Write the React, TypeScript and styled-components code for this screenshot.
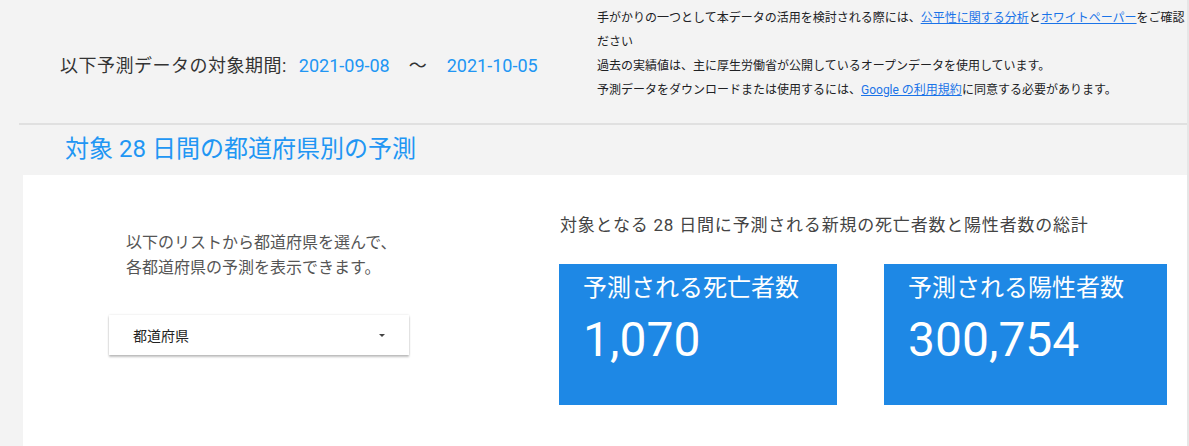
import React from "react";
import styled, { createGlobalStyle } from "styled-components";

const GlobalStyle = createGlobalStyle`
    html, body {
        margin: 0;
        padding: 0;
        background: #f3f3f3;
        font-family: "Roboto", "Noto Sans CJK JP", sans-serif;
        overflow: hidden;
    }
`;

const PageStyled = styled.div`
    width: 1187px;
    height: 446px;
    border-right: 2px solid #e6e6e6;
    overflow: hidden;
`;

const HeaderStyled = styled.div`
    display: flex;
    align-items: flex-start;
    height: 123px;
    padding-left: 60px;
    overflow: hidden;
`;

const PeriodStyled = styled.div`
    width: 537px;
    padding-top: 54px;
    display: flex;
    align-items: center;
    font-size: 18px;
    line-height: 24px;
    color: #333;
    white-space: nowrap;

    .label {
        margin-right: 12px;
        letter-spacing: 0.5px;
    }
    .date {
        color: #2196f3;
    }
    .tilde {
        margin: 0 20px 0 19px;
        color: #333;
    }
`;

const NotesStyled = styled.div`
    margin-top: -18px;
    font-size: 12px;
    line-height: 24px;
    color: #202124;

    p {
        margin: 0;
        white-space: nowrap;
    }
    a {
        color: #1a73e8;
        text-decoration: underline;
    }
`;

const DividerStyled = styled.div`
    margin-left: 19px;
    height: 2px;
    background: #e0e0e0;
`;

const SectionTitle = styled.h2`
    margin: 0;
    padding: 8px 0 10px 65px;
    font-size: 24px;
    line-height: 32px;
    font-weight: 400;
    color: #2196f3;
`;

const PanelStyled = styled.div`
    margin-left: 23px;
    height: 300px;
    background: #fff;
    display: flex;
`;

const LeftColumn = styled.div`
    width: 450px;
    padding: 55px 0 0 86px;
`;

const HintText = styled.p`
    margin: 0 0 35px 17px;
    font-size: 16px;
    line-height: 25px;
    color: #555;
`;

const SelectStyled = styled.div`
    width: 300px;
    height: 40px;
    box-sizing: border-box;
    padding: 0 24px;
    display: flex;
    align-items: center;
    justify-content: space-between;
    background: #fff;
    box-shadow: 0 2px 2px rgba(0, 0, 0, 0.24), 0 0 2px rgba(0, 0, 0, 0.12);
    font-size: 14px;
    color: #222;

    .caret {
        width: 0;
        height: 0;
        border-left: 3px solid transparent;
        border-right: 3px solid transparent;
        border-top: 3px solid #444;
    }
`;

const RightColumn = styled.div`
    padding-top: 38px;
`;

const TotalsTitle = styled.p`
    margin: 0 0 27px 1px;
    font-size: 17px;
    line-height: 24px;
    letter-spacing: 0.8px;
    color: #444;
    white-space: nowrap;
`;

const CardRow = styled.div`
    display: flex;
    gap: 47px;
`;

const CardStyled = styled.div<{ width: number }>`
    width: ${(p) => p.width}px;
    height: 141px;
    box-sizing: border-box;
    padding: 8px 24px 0;
    background: #1e88e5;
    color: #fff;

    .title {
        font-size: 24px;
        line-height: 32px;
        font-weight: 400;
    }
    .value {
        margin-top: 8px;
        font-size: 48px;
        line-height: 56px;
        font-weight: 400;
    }
`;

const cards = [
    { title: "予測される死亡者数", value: "1,070", width: 278 },
    { title: "予測される陽性者数", value: "300,754", width: 283 },
];

const App = () => {
    return (
        <PageStyled>
            <GlobalStyle />
            <HeaderStyled>
                <PeriodStyled>
                    <span className="label">以下予測データの対象期間:</span>
                    <span className="date">2021-09-08</span>
                    <span className="tilde">〜</span>
                    <span className="date">2021-10-05</span>
                </PeriodStyled>
                <NotesStyled>
                    <p>
                        予測モデルの概要は、<a href="#">詳細な説明</a>をご覧ください。
                    </p>
                    <p>
                        手がかりの一つとして本データの活用を検討される際には、
                        <a href="#">公平性に関する分析</a>と
                        <a href="#">ホワイトペーパー</a>をご確認
                    </p>
                    <p>ださい</p>
                    <p>
                        過去の実績値は、主に厚生労働省が公開しているオープンデータを使用しています。
                    </p>
                    <p>
                        予測データをダウンロードまたは使用するには、
                        <a href="#">Google の利用規約</a>に同意する必要があります。
                    </p>
                </NotesStyled>
            </HeaderStyled>
            <DividerStyled />
            <SectionTitle>対象 28 日間の都道府県別の予測</SectionTitle>
            <PanelStyled>
                <LeftColumn>
                    <HintText>
                        以下のリストから都道府県を選んで、
                        <br />
                        各都道府県の予測を表示できます。
                    </HintText>
                    <SelectStyled>
                        <span>都道府県</span>
                        <div className="caret"></div>
                    </SelectStyled>
                </LeftColumn>
                <RightColumn>
                    <TotalsTitle>
                        対象となる 28 日間に予測される新規の死亡者数と陽性者数の総計
                    </TotalsTitle>
                    <CardRow>
                        {cards.map((card) => (
                            <CardStyled key={card.title} width={card.width}>
                                <div className="title">{card.title}</div>
                                <div className="value">{card.value}</div>
                            </CardStyled>
                        ))}
                    </CardRow>
                </RightColumn>
            </PanelStyled>
        </PageStyled>
    );
};

export default App;
